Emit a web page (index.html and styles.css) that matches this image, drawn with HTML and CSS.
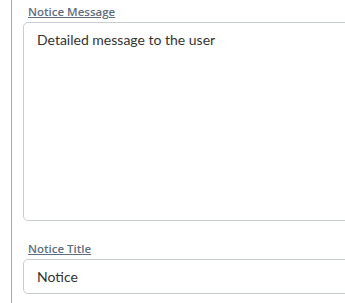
FILE: index.html
```html
<!DOCTYPE html>
<html>
<head>
<meta charset="utf-8">
<link rel="stylesheet" href="styles.css">
</head>
<body>
<div class="panel">
  <div class="field">
    <label class="field-label" for="msg">Notice Message</label>
    <textarea id="msg" class="field-area">Detailed message to the user</textarea>
  </div>
  <div class="field field-title">
    <label class="field-label" for="title">Notice Title</label>
    <input id="title" class="field-input" type="text" value="Notice">
  </div>
</div>
</body>
</html>
```
FILE: styles.css
```css
html, body {
  margin: 0;
  padding: 0;
  background: #ffffff;
  overflow: hidden;
}
body {
  width: 345px;
  height: 303px;
  font-family: "Lato", "Open Sans", sans-serif;
}
.panel {
  margin-left: 11px;
  border-left: 1px solid #a8a8a8;
  padding-left: 11px;
  padding-top: 4px;
  height: 303px;
  box-sizing: border-box;
  overflow: hidden;
}
.field {
  display: flex;
  flex-direction: column;
}
.field-title {
  margin-top: 20px;
}
.field-label {
  font-family: "Open Sans", "Lato", sans-serif;
  font-size: 11.5px;
  font-weight: 600;
  line-height: 16px;
  color: #5f6e80;
  text-decoration: underline;
  padding-left: 5px;
  margin-bottom: 2px;
}
.field-area,
.field-input {
  font-family: "Lato", "Open Sans", sans-serif;
  font-size: 14px;
  color: #333333;
  border: 1px solid #c8cdd2;
  border-radius: 5px;
  width: 340px;
  box-sizing: border-box;
  padding: 7px 13px;
  margin: 0;
  outline: none;
  background: #ffffff;
}
.field-area {
  height: 199px;
  resize: none;
  line-height: 20px;
}
.field-input {
  height: 35px;
  line-height: 20px;
}
```
